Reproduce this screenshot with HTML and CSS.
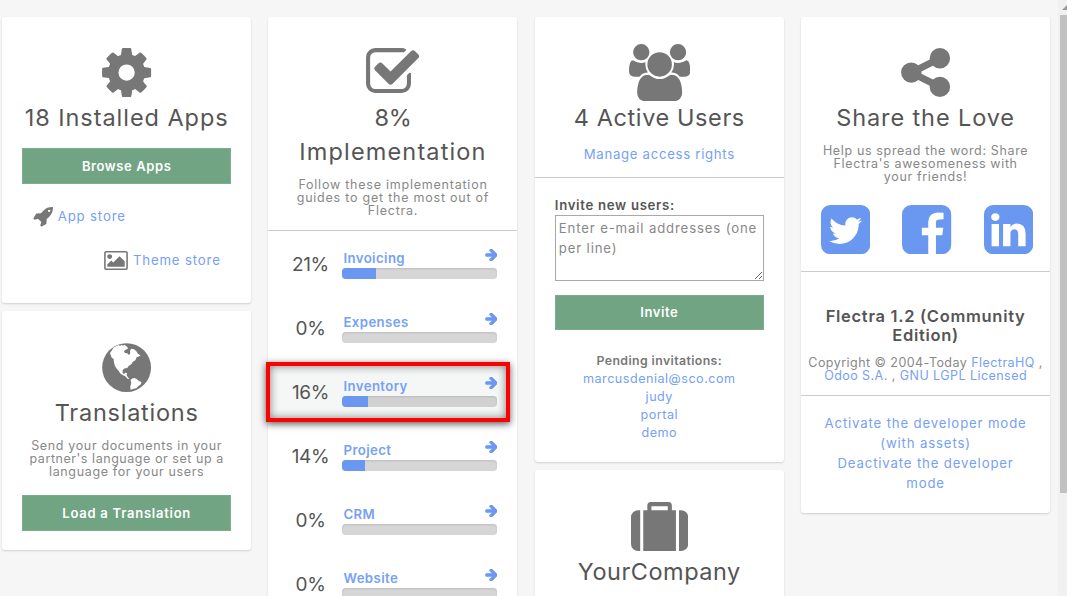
FILE: index.html
```html
<!DOCTYPE html>
<html lang="en">
<head>
<meta charset="utf-8">
<title>Settings Dashboard</title>
<link rel="stylesheet" href="styles.css">
</head>
<body>
<main class="board">
  <div class="column">
    <section class="card card-apps">
      <svg class="icon" viewBox="0 0 1792 1792"><path d="M1152 896q0-106-75-181t-181-75-181 75-75 181 75 181 181 75 181-75 75-181zm512-109v222q0 12-8 23t-20 13l-185 28q-19 54-39 91 35 50 107 138 10 12 10 25t-9 23q-27 37-99 108t-94 71q-12 0-26-9l-138-108q-44 23-91 38-16 136-29 186-7 28-36 28h-222q-14 0-24.500-8.500t-11.500-21.500l-28-184q-49-16-90-37l-141 107q-10 9-25 9-14 0-25-11-126-114-165-168-7-10-7-23 0-12 8-23 15-21 51-66.500t54-70.500q-27-50-41-99l-183-27q-13-2-21-12.500t-8-23.500v-222q0-12 8-23t19-13l186-28q14-46 39-92-40-57-107-138-10-12-10-24 0-10 9-23 26-36 98.500-107.500t94.500-71.500q13 0 26 10l138 107q44-23 91-38 16-136 29-186 7-28 36-28h222q14 0 24.500 8.500t11.500 21.500l28 184q49 16 90 37l142-107q9-9 24-9 13 0 25 10 129 119 165 170 7 8 7 22 0 12-8 23-15 21-51 66.500t-54 70.500q26 50 41 98l183 28q13 2 21 12.500t8 23.500z"/></svg>
      <h2 class="title t-apps">18 Installed Apps</h2>
      <button class="button">Browse Apps</button>
      <div class="store store-left">
        <svg class="rocket" viewBox="0 128 1664 1664"><path d="M1440 448q0-40-28-68t-68-28-68 28-28 68 28 68 68 28 68-28 28-68zm224-288q0 249-75.500 430.500t-253.500 360.500q-81 80-195 176l-20 379q-2 16-16 26l-384 224q-7 4-16 4-12 0-23-9l-64-64q-13-14-8-32l85-276-281-281-276 85q-3 1-9 1-14 0-23-9l-64-64q-17-19-5-39l224-384q10-14 26-16l379-20q96-114 176-195 188-187 358-258t431-71q14 0 24 9.500t10 22.500z"/></svg>
        <a class="link">App store</a>
      </div>
      <div class="store store-right">
        <svg class="picture" viewBox="-64 128 1920 1536"><path d="M576 576q0 80-56 136t-136 56-136-56-56-136 56-136 136-56 136 56 56 136zm1024 384v448h-1408v-192l320-320 160 160 512-512zm96-704h-1600q-13 0-22.500 9.500t-9.500 22.500v1216q0 13 9.500 22.500t22.500 9.500h1600q13 0 22.500-9.500t9.500-22.500v-1216q0-13-9.500-22.500t-22.500-9.500zm160 32v1216q0 66-47 113t-113 47h-1600q-66 0-113-47t-47-113v-1216q0-66 47-113t113-47h1600q66 0 113 47t47 113z"/></svg>
        <a class="link">Theme store</a>
      </div>
    </section>
    <section class="card card-translations">
      <svg class="icon" viewBox="0 0 172 172"><circle cx="86" cy="86" r="73.500"/><path class="land" d="M36 42l6-8 4-8 8-4 8-4 4 3 5-4 4 3 5-3 4 4 4 2 2 6-7 3-5 5 3 5 7 1 5 5 4-4-1-8 4-7 7 1 8 6 5 8 8 6-5 3-7 2-3 8-9 6-3 6-9 6-4 6-9 2-5 5 0 8 4 3 5-4 4 2-1 6 4 6 5 6-7-2-6-7-8-4-7-4-4-7-6-7-6-9-3-11-1-10-6-4z M98 123l5-4 7-2 7 4 6 5 8 3-2 7-8 6-6 6-8 2-9 3-1-10 3-10z"/></svg>
      <h2 class="title t-trans">Translations</h2>
      <p class="note"><span class="n-send">Send your documents in your</span><br><span class="n-partner">partner's language or set up a</span><br>language for your users</p>
      <button class="button button-wide-text">Load a Translation</button>
    </section>
  </div>

  <div class="column">
    <section class="card card-guides">
      <svg class="icon" viewBox="0 0 1792 1792"><path d="M1472 930v318q0 119-84.500 203.500t-203.500 84.500h-832q-119 0-203.500-84.500t-84.500-203.500v-832q0-119 84.500-203.500t203.500-84.500h832q63 0 117 25 15 7 18 23 3 17-9 29l-49 49q-10 10-23 10-3 0-9-2-23-6-45-6h-832q-66 0-113 47t-47 113v832q0 66 47 113t113 47h832q66 0 113-47t47-113v-254q0-13 9-22l64-64q10-10 23-10 6 0 12 3 20 8 20 29zm231-489l-814 814q-24 24-57 24t-57-24l-430-430q-24-24-24-57t24-57l110-110q24-24 57-24t57 24l263 263 647-647q24-24 57-24t57 24l110 110q24 24 24 57t-24 57z"/></svg>
      <h2 class="title t-impl"><span class="t-percent">8%</span><br>Implementation</h2>
      <p class="note n-impl">Follow these implementation<br>guides to get the most out of<br>Flectra.</p>
      <div class="guides">
        <div class="guide"><span class="percent">21%</span><div class="progress"><div class="guide-head"><a>Invoicing</a><svg class="arrow" viewBox="64 217 1536 1536"><use href="#arrow"/></svg></div><div class="track"><div class="fill" style="width:21.500%"></div></div></div></div>
        <div class="guide"><span class="percent">0%</span><div class="progress"><div class="guide-head"><a>Expenses</a><svg class="arrow" viewBox="64 217 1536 1536"><use href="#arrow"/></svg></div><div class="track"></div></div></div>
        <div class="guide guide-active"><span class="percent">16%</span><div class="progress"><div class="guide-head"><a>Inventory</a><svg class="arrow" viewBox="64 217 1536 1536"><use href="#arrow"/></svg></div><div class="track"><div class="fill" style="width:16.300%"></div></div></div><div class="marker"></div></div>
        <div class="guide"><span class="percent">14%</span><div class="progress"><div class="guide-head"><a>Project</a><svg class="arrow" viewBox="64 217 1536 1536"><use href="#arrow"/></svg></div><div class="track"><div class="fill" style="width:14.300%"></div></div></div></div>
        <div class="guide"><span class="percent">0%</span><div class="progress"><div class="guide-head"><a>CRM</a><svg class="arrow" viewBox="64 217 1536 1536"><use href="#arrow"/></svg></div><div class="track"></div></div></div>
        <div class="guide"><span class="percent">0%</span><div class="progress"><div class="guide-head"><a>Website</a><svg class="arrow" viewBox="64 217 1536 1536"><use href="#arrow"/></svg></div><div class="track"></div></div></div>
      </div>
    </section>
  </div>

  <div class="column">
    <section class="card card-users">
      <svg class="icon icon-wide" viewBox="0 0 1920 1792"><path d="M593 896q-162 5-265 128h-134q-82 0-138-40.500t-56-118.500q0-353 124-353 6 0 43.500 21t97.500 42.500 119 21.500q67 0 133-23-5 37-5 66 0 139 81 256zm1071 637q0 120-73 189.500t-194 69.500h-874q-121 0-194-69.500t-73-189.500q0-53 3.500-103.500t14-109 26.500-108.500 43-97.500 62-81 85.500-53.500 111.500-20q10 0 43 21.500t73 48 107 48 135 21.500 135-21.500 107-48 73-48 43-21.500q61 0 111.500 20t85.500 53.500 62 81 43 97.500 26.500 108.500 14 109 3.500 103.500zm-1024-1277q0 106-75 181t-181 75-181-75-75-181 75-181 181-75 181 75 75 181zm704 384q0 159-112.500 271.500t-271.500 112.500-271.500-112.500-112.500-271.500 112.500-271.500 271.500-112.500 271.500 112.500 112.500 271.500zm576 225q0 78-56 118.500t-138 40.500h-134q-103-123-265-128 81-117 81-256 0-29-5-66 66 23 133 23 59 0 119-21.500t97.500-42.500 43.500-21q124 0 124 353zm-128-609q0 106-75 181t-181 75-181-75-75-181 75-181 181-75 181 75 75 181z"/></svg>
      <h2 class="title t-users">4 Active Users</h2>
      <div class="access"><a class="link">Manage access rights</a></div>
      <div class="invite">
        <label class="invite-label" for="emails">Invite new users:</label>
        <textarea class="emails" id="emails" placeholder="Enter e-mail addresses (one per line)"></textarea>
        <button class="button">Invite</button>
        <div class="pending"><b>Pending invitations:</b><a>marcusdenial@sco.com</a><a>judy</a><a>portal</a><a>demo</a></div>
      </div>
    </section>
    <section class="card card-company">
      <svg class="icon" viewBox="0 0 1792 1792"><path d="M224 384h64v1280h-64q-92 0-158-66t-66-158v-832q0-92 66-158t158-66zM384 384h128v-160q0-40 28-68t68-28h576q40 0 68 28t28 68v160h128v1280h-1024zM640 384h512v-128h-512zM1504 384h64q92 0 158 66t66 158v832q0 92-66 158t-158 66h-64z" fill-rule="evenodd"/></svg>
      <h2 class="title t-company">YourCompany</h2>
    </section>
  </div>

  <div class="column">
    <section class="card card-share">
      <svg class="icon" viewBox="0 0 1792 1792"><path d="M1344 1024q133 0 226.500 93.500t93.500 226.500-93.500 226.500-226.500 93.500-226.500-93.500-93.500-226.500q0-12 2-34l-360-180q-92 86-218 86-133 0-226.500-93.500t-93.500-226.500 93.500-226.500 226.500-93.500q126 0 218 86l360-180q-2-22-2-34 0-133 93.500-226.500t226.500-93.500 226.500 93.500 93.500 226.500-93.500 226.500-226.500 93.500q-126 0-218-86l-360 180q2 22 2 34t-2 34l360 180q92-86 218-86z"/></svg>
      <h2 class="title t-share">Share the Love</h2>
      <p class="note">Help us spread the word: Share<br>Flectra's awesomeness with<br>your friends!</p>
      <div class="social">
        <svg viewBox="128 128 1536 1536"><path d="M1408 610q-56 25-121 34 68-40 93-117-65 38-134 51-61-66-153-66-87 0-148.500 61.500t-61.500 148.500q0 29 5 48-129-7-242-65t-192-155q-29 50-29 106 0 114 91 175-47-1-100-26v2q0 75 50 133.500t123 72.500q-29 8-51 8-13 0-39-4 21 63 74.500 104t121.500 42q-116 90-261 90-26 0-50-3 148 94 322 94 112 0 210-35.500t168-95 120.500-137 75-162 24.500-168.500q0-18-1-27 63-45 105-109zm256-194v960q0 119-84.500 203.500t-203.500 84.500h-960q-119 0-203.500-84.500t-84.500-203.500v-960q0-119 84.500-203.500t203.500-84.500h960q119 0 203.500 84.500t84.500 203.500z"/></svg>
        <svg viewBox="128 128 1536 1536"><path d="M1376 128q119 0 203.500 84.500t84.500 203.500v960q0 119-84.500 203.500t-203.500 84.500h-188v-595h199l30-232h-229v-148q0-56 23.500-84t91.500-28l122-1v-207q-63-9-178-9-136 0-217.500 80t-81.500 226v171h-200v232h200v595h-532q-119 0-203.500-84.500t-84.500-203.500v-960q0-119 84.500-203.500t203.500-84.500h960z"/></svg>
        <svg viewBox="128 128 1536 1536"><path d="M365 1414h231v-694h-231v694zm246-908q-1-52-36-86t-93-34-94.500 34-36.500 86q0 51 35.500 85.500t92.500 34.500h1q59 0 95-34.500t36-85.500zm585 908h231v-398q0-154-73-233t-193-79q-136 0-209 117h2v-101h-231q3 66 0 694h231v-388q0-38 7-56 15-35 45-59.500t74-24.500q116 0 116 157v371zm468-998v960q0 119-84.500 203.500t-203.500 84.500h-960q-119 0-203.500-84.500t-84.500-203.500v-960q0-119 84.500-203.500t203.500-84.500h960q119 0 203.500 84.500t84.500 203.500z"/></svg>
      </div>
      <div class="about">
        <h3 class="version">Flectra 1.2 (Community<br>Edition)</h3>
        <p class="note n-copy">Copyright © 2004-Today <a>FlectraHQ</a> ,<br><a>Odoo S.A.</a> , <a>GNU LGPL Licensed</a></p>
      </div>
      <div class="developer"><a class="link">Activate the developer mode<br>(with assets)</a><a class="link">Deactivate the developer<br>mode</a></div>
    </section>
  </div>
</main>
<aside class="scrollbar"><svg class="scroll-up" viewBox="0 0 9 15"><path d="M4 10l5-5v5z"/></svg><div class="thumb"></div></aside>
<svg class="defs"><defs><path id="arrow" d="M1600 960q0 54-37 91l-651 651q-39 37-91 37-51 0-90-37l-75-75q-38-38-38-91t38-91l293-293h-704q-52 0-84.500-37.500t-32.500-90.500v-128q0-53 32.500-90.500t84.500-37.500h704l-293-294q-38-36-38-90t38-90l75-75q38-38 90-38 53 0 91 38l651 651q37 35 37 90z"/></defs></svg>
</body>
</html>
```
FILE: styles.css
```css
* { box-sizing: border-box; }
body {
  margin: 0;
  height: 596px;
  overflow: hidden;
  display: flex;
  justify-content: space-between;
  background: #f6f6f6;
  color: #555;
  font: 13.2px/20px Inter, "Liberation Sans", sans-serif;
  letter-spacing: 0.8px;
}
.board {
  display: grid;
  grid-template-columns: repeat(4, 249px);
  gap: 17.3px;
  height: 596px;
  overflow: hidden;
  padding: 16.5px 8px 0 2.2px;
}
.column { display: flex; flex-direction: column; gap: 8px; min-height: 0; }
.card {
  flex: none;
  display: flex;
  flex-direction: column;
  align-items: center;
  padding-top: 27px;
  background: #fff;
  border-radius: 3px;
  box-shadow: 0 1px 2px rgba(0, 0, 0, 0.16);
  text-align: center;
  white-space: nowrap;
}
.card-apps { height: 286px; }
.card-translations { height: 239px; padding-top: 28px; }
.card-guides { height: 579.5px; border-radius: 3px 3px 0 0; }
.card-users { height: 445px; }
.card-company { height: 126.5px; padding-top: 28px; border-radius: 3px 3px 0 0; }
.card-share { height: 496px; }
.icon { width: 57.2px; height: 57.2px; fill: #777; flex: none; }
.icon-wide { width: 61.3px; }
.land { fill: #fff; }
.title { margin: 0; font-weight: 400; font-size: 23.5px; line-height: 34.5px; }
.t-apps { letter-spacing: 0.95px; }
.t-impl { letter-spacing: 1.15px; }
.t-percent { letter-spacing: -0.4px; }
.t-users { letter-spacing: 0.6px; }
.t-share { letter-spacing: 0.9px; }
.t-trans { letter-spacing: 0.75px; }
.t-company { letter-spacing: 0.5px; }
.note { margin: 8.5px 0 0; font-size: 12.5px; line-height: 13px; letter-spacing: 0.65px; color: #888; }
.n-impl { margin-top: 8px; letter-spacing: 0.77px; }
.n-partner { letter-spacing: 0.55px; }
.n-copy { letter-spacing: 0.45px; }
a { color: #76a1f4; }
.link { letter-spacing: 0.85px; }
.button {
  width: 209.5px;
  height: 36px;
  margin-top: 12.5px;
  padding: 0;
  flex: none;
  border: 1px solid #7eac8e;
  background: #71a483;
  color: #fff;
  font: 600 13px/20px Inter, sans-serif;
  letter-spacing: 0.6px;
}
.button-wide-text { letter-spacing: 0.75px; }
.store { display: flex; align-items: center; width: 209px; height: 20px; }
.store .link { padding-bottom: 2px; }
.store-left { margin-top: 23px; padding-left: 11px; gap: 4.5px; }
.store-right { margin-top: 24px; justify-content: flex-end; padding-right: 10.5px; gap: 5px; }
.rocket { width: 20px; height: 20px; fill: #777; }
.picture { width: 24px; height: 19px; fill: #777; }
.card-translations .button { margin-top: 17px; }

.guides { width: 100%; margin-top: 13.5px; height: 366px; border-top: 1px solid #ccc; }
.guide {
  position: relative;
  display: grid;
  grid-template-columns: 84px 1fr;
  align-items: center;
  height: 64px;
  padding-right: 20px;
}
.guide-active { z-index: 1; }
.guide-active::before {
  content: "";
  position: absolute;
  inset: 4px 11px 4px 0;
  background: #f5f7f6;
}
.guide-active .track { background: #d0d1d0; }
.percent { position: relative; padding-top: 4px; font-size: 19px; letter-spacing: -0.4px; }
.progress { position: relative; margin-left: -10px; padding-top: 1px; }
.guide-head { display: flex; justify-content: space-between; height: 19px; padding-left: 1px; text-align: left; font-weight: 600; line-height: 18px; letter-spacing: 0.4px; }
.arrow { width: 12.5px; height: 12.5px; fill: #6a98f0; stroke: #6a98f0; stroke-width: 70; }
.track { height: 11px; border-radius: 4px; overflow: hidden; background: #d6d6d6; box-shadow: inset 0 1px 2px rgba(0, 0, 0, 0.12); }
.fill { height: 11px; background: #6a98f0; }
.marker {
  position: absolute;
  inset: 2.6px 7px 1.4px -2px;
  border: 4px solid #f00;
  box-shadow: 0 2px 7px rgba(0, 0, 0, 0.65), inset 0 0 8px rgba(0, 0, 0, 0.5);
}

.access { width: 100%; height: 42.5px; padding-top: 9px; border-bottom: 1px solid #ccc; }
.access .link { letter-spacing: 0.7px; }
.invite { width: 209px; display: flex; flex-direction: column; padding-top: 17px; }
.invite-label { text-align: left; font-weight: 600; letter-spacing: 0.7px; }
.emails {
  height: 66px;
  padding: 2px 3px;
  border: 1px solid #a9a9a9;
  border-radius: 0;
  font: 13.2px/20px Inter, sans-serif;
  letter-spacing: 0.85px;
  resize: vertical;
}
.emails::placeholder { color: #888; }
.invite .button { width: 209px; height: 35.5px; margin-top: 14px; }
.pending { display: flex; flex-direction: column; margin-top: 21.7px; font-size: 12.6px; line-height: 18px; letter-spacing: 0.5px; }
.pending b { font-size: 12.3px; font-weight: 600; letter-spacing: 0.4px; color: #777; }

.social { display: flex; justify-content: space-between; width: 212px; margin: 22px 0 0 3px; }
.social svg { width: 49.2px; height: 49.2px; fill: #6a98f0; }
.about { width: 100%; margin-top: 17px; padding-bottom: 12.5px; border: solid #ccc; border-width: 1px 0; }
.version { margin: 35.5px 0 0; font-size: 16.5px; font-weight: 600; line-height: 19px; letter-spacing: 0.7px; }
.about .note { margin-top: 11px; }
.developer { display: flex; flex-direction: column; padding-top: 17.3px; }

.scrollbar { width: 9px; background: #f1f1f1; display: flex; flex-direction: column; flex: none; }
.scroll-up { width: 9px; height: 15px; fill: #999; flex: none; }
.thumb { height: 478px; margin-left: 2px; background: #c1c1c1; }
.defs { position: absolute; width: 0; height: 0; }
```
